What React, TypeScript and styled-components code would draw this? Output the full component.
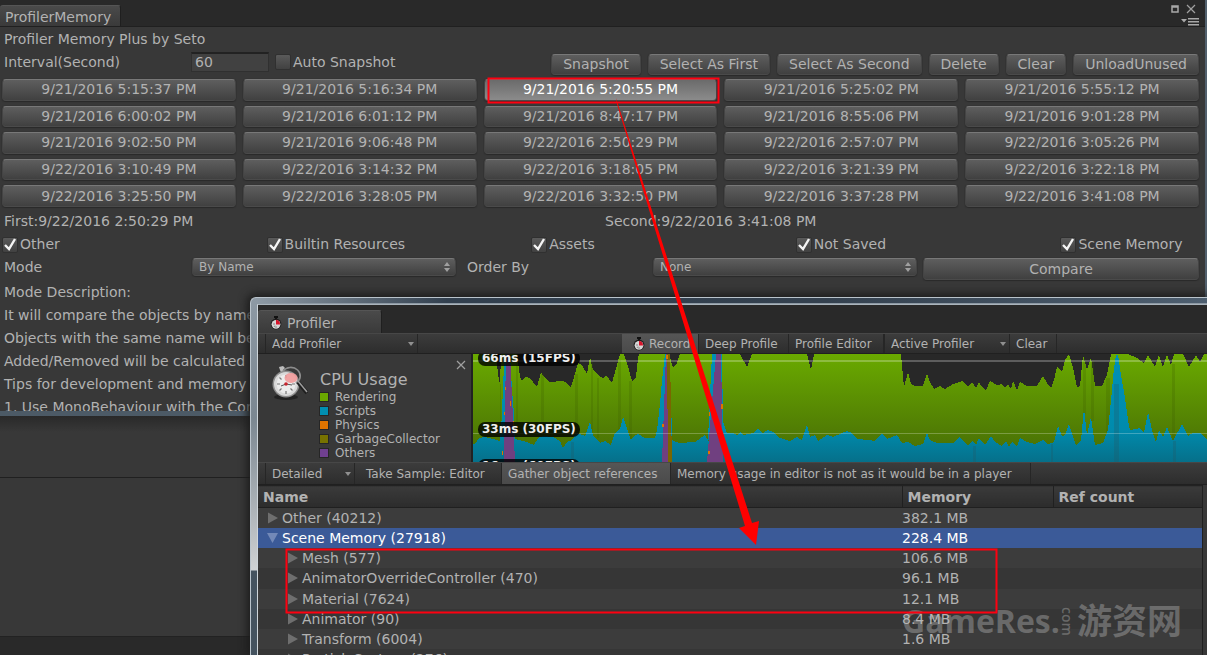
import React from "react";
import styled, { createGlobalStyle, css } from "styled-components";

const GlobalStyle = createGlobalStyle`
  * { box-sizing: border-box; }
  html, body { margin: 0; background: #292929; }
  body, button, input, select, table {
    font-family: "DejaVu Sans", Verdana, "Noto Sans CJK SC", sans-serif;
    font-size: 14px;
    color: #b2b2b2;
  }
`;

const Desktop = styled.main`
  position: relative;
  display: flex;
  flex-direction: column;
  height: 100vh;
  overflow: hidden;
  background: #383838;
`;

/* ---------- Memory window ---------- */

const MemoryWindow = styled.section`
  display: flex;
  flex-direction: column;
  flex: none;
  height: 416px;
  overflow: hidden;
  background: #383838;
  border-right: 2px solid #51606d;
  border-bottom: 5px solid #4c5a66;
`;

const TitleStrip = styled.header`
  display: flex;
  justify-content: space-between;
  align-items: flex-end;
  flex: none;
  height: 27px;
  padding-right: 6px;
  background: #292929;
  border-bottom: 1px solid #202020;
`;

const Tab = styled.h1<{ $wide?: boolean }>`
  display: flex;
  align-items: center;
  gap: ${(p) => (p.$wide ? 5 : 6)}px;
  height: ${(p) => (p.$wide ? 23 : 21)}px;
  margin: 0;
  padding: ${(p) => (p.$wide ? "2px 45px 0 12px" : "1px 9px 0 5px")};
  font-size: 14px;
  font-weight: 400;
  white-space: nowrap;
  background: linear-gradient(#4a4a4a, #3a3a3a);
  border-top: 1px solid #555;
  border-right: 1px solid #1f1f1f;
  border-radius: 3px 3px 0 0;
`;

const WindowButtons = styled.div`
  display: grid;
  justify-items: end;
  gap: 4px;
  line-height: 0;
`;

const IconButton = styled.button`
  display: inline-flex;
  padding: 0;
  background: none;
  border: 0;
`;

const ButtonPair = styled.div`
  display: flex;
  align-items: center;
  gap: 7px;
  padding-right: 3px;
`;

const MemoryBody = styled.div`
  flex: none;
  padding: 1px 6px 0 2px;
`;

const TextLine = styled.p`
  margin: 0;
  padding-left: 2px;
  line-height: 23px;
  white-space: nowrap;
`;

const ControlRow = styled.div`
  display: flex;
  align-items: center;
  height: 22px;
  margin-bottom: 6px;
`;

const FieldLabel = styled.label<{ $width: number }>`
  width: ${(p) => p.$width}px;
  flex: none;
  padding-left: 2px;
`;

const NumberField = styled.input`
  width: 78px;
  height: 20px;
  padding: 0 3px 1px;
  background: #414141;
  border: 1px solid #303030;
  border-top: 2px solid #222;
`;

const Check = styled.label`
  display: inline-flex;
  align-items: center;
  gap: 2px;
  white-space: nowrap;
`;

const CheckBox = styled.input`
  appearance: none;
  width: 16px;
  height: 16px;
  margin: 0;
  background: linear-gradient(#5a5a5a, #414141);
  border: 1px solid #303030;
  border-radius: 2px;
  &:checked {
    background: url("data:image/svg+xml,%3Csvg xmlns='http://www.w3.org/2000/svg' viewBox='0 0 14 14'%3E%3Cpath d='M2 7l4 4 6-10' fill='none' stroke='%23f4f4f4' stroke-width='2.4'/%3E%3C/svg%3E") center / 14px 14px no-repeat,
      linear-gradient(#5a5a5a, #414141);
  }
`;

const raised = css`
  color: #b2b2b2;
  background: linear-gradient(#5e5e5e, #404040);
  border: 1px solid #444;
  border-top-color: #787878;
  border-bottom-color: #4a4a4a;
  border-radius: 4px;
  box-shadow: 0 1px 1px #2a2a2a, 0 0 1px #222;
`;

const Button = styled.button<{ $active?: boolean }>`
  ${raised}
  padding: 0 11px;
  height: 21px;
  line-height: 19px;
  white-space: nowrap;
  ${(p) =>
    p.$active &&
    css`
      color: #fff;
      background: linear-gradient(#6b6b6b, #8b8b8b);
    `}
`;

const Actions = styled.div`
  display: flex;
  gap: 7px;
  margin-left: auto;
  padding-top: 4px;
`;

const SnapshotGrid = styled.div`
  display: grid;
  grid-template-columns: repeat(5, minmax(0, 1fr));
  grid-template-rows: repeat(5, 1fr);
  gap: 5px 7px;
  height: 128px;
  margin-bottom: 3px;
  ${Button} { height: auto; padding: 0; }
`;

const Columns = styled.div<{ $count: number }>`
  display: grid;
  grid-template-columns: repeat(${(p) => p.$count}, 1fr);
  gap: ${(p) => (p.$count === 2 ? 5 : 0)}px;
  width: ${(p) => (p.$count === 5 ? "calc(100% + 126px)" : "100%")};
  line-height: 23px;
`;

const ModeRow = styled.div`
  display: grid;
  grid-template-columns: 190px 264px 9px 188px 264px 1fr;
  grid-template-rows: 22px;
  align-items: center;
  margin-bottom: 3px;
  > :nth-child(4) { grid-column: 5; }
  > :nth-child(3) { grid-column: 4; }
  > ${Button} { margin: 4px 0 0 6px; height: 22px; }
`;

const Select = styled.select`
  ${raised}
  appearance: none;
  width: 100%;
  height: 18px;
  padding: 0 6px;
  font-size: 12px;
  background: url("data:image/svg+xml,%3Csvg xmlns='http://www.w3.org/2000/svg' viewBox='0 0 6 10'%3E%3Cpath d='M3 0l3 4H0zM3 10l3-4H0z' fill='%23a0a0a0'/%3E%3C/svg%3E") right 5px center / 6px 10px no-repeat,
    linear-gradient(#5e5e5e, #404040);
`;

/* ---------- Window behind ---------- */

const BackWindow = styled.section`
  display: flex;
  flex-direction: column;
  flex: 1;
  background: linear-gradient(#292929, #383838 16px);
`;

const BackHeader = styled.div`
  height: 62px;
  border-bottom: 1px solid #202020;
`;

const BackFooter = styled.div`
  height: 19px;
  margin-top: auto;
  background: #292929;
  border-top: 1px solid #222;
`;

/* ---------- Profiler window ---------- */

const ProfilerWindow = styled.section`
  position: absolute;
  left: 250px;
  top: 297px;
  right: 0;
  bottom: 0;
  display: flex;
  padding: 6px 0 0 6px;
  background: linear-gradient(#8d99a4, #7b8791 120px, #c2c6c9 250px, #d0d3d5 272px, #45535f 273px);
  border: 1px solid #b9c3cb;
  border-width: 1px 0 0 1px;
  border-radius: 6px 0 0 0;
  box-shadow: -1px -1px 8px 2px #1c1c1c;
`;

const TopFrame = styled.div`
  position: absolute;
  left: 6px;
  right: 0;
  top: 0;
  height: 5px;
  background: linear-gradient(90deg, #8d99a4, #32404f 190px, #34414f 60%, #4e5f70);
`;

const ProfilerInner = styled.div`
  display: flex;
  flex-direction: column;
  flex: 1;
  min-width: 0;
  overflow: hidden;
  background: #383838;
  border-top: 1px solid #aab4bc;
  border-left: 1px solid #cfd6db;
`;

const ProfilerTabs = styled.header`
  display: flex;
  align-items: flex-end;
  flex: none;
  height: 28px;
  background: #292929;
`;

const Toolbar = styled.div<{ $height: number }>`
  display: flex;
  align-items: stretch;
  flex: none;
  height: ${(p) => p.$height}px;
  padding-left: 7px;
  background: linear-gradient(#3c3c3c, #2d2d2d);
  border-top: 1px solid #474747;
  border-bottom: 1px solid #202020;
`;

const ToolItem = styled.button<{ $on?: boolean; $width: number }>`
  display: flex;
  align-items: center;
  gap: 4px;
  flex: none;
  width: ${(p) => p.$width}px;
  padding: 0 0 0 6px;
  font-size: 12px;
  white-space: nowrap;
  background: ${(p) => (p.$on ? "linear-gradient(#565656, #4a4a4a)" : "none")};
  border: 0;
  border-right: 1px solid #262626;
`;

const RecordItem = styled(ToolItem)`
  padding-left: 11px;
`;

const ToolSelect = styled.select<{ $width: number }>`
  appearance: none;
  width: ${(p) => p.$width}px;
  padding: 0 6px;
  font-size: 12px;
  background: url("data:image/svg+xml,%3Csvg xmlns='http://www.w3.org/2000/svg' viewBox='0 0 6 4'%3E%3Cpath d='M0 0h6L3 4z' fill='%23909090'/%3E%3C/svg%3E") right 3px center / 6px 4px no-repeat;
  border: 0;
  border-left: 1px solid #262626;
  border-right: 1px solid #262626;
  border-radius: 0;
`;

const ToolText = styled.span`
  flex: none;
  width: 360px;
  padding-left: 6px;
  font-size: 12px;
  line-height: 22px;
  white-space: nowrap;
  border-right: 1px solid #262626;
`;

const Spacer = styled.div<{ $width: number }>`
  width: ${(p) => p.$width}px;
  flex: none;
`;

const ChartArea = styled.div`
  display: flex;
  flex: none;
  height: 108px;
`;

const Legend = styled.div`
  display: flex;
  flex: none;
  width: 215px;
  padding: 6px 5px 0 13px;
  border-right: 2px solid #222;
`;

const LogoSlot = styled.div`
  padding-top: 5px;
`;

const LegendText = styled.div`
  flex: 1;
  padding: 10px 0 0 12px;
`;

const LegendTitle = styled.h2`
  margin: 0;
  font-size: 16px;
  font-weight: 400;
  line-height: 20px;
`;

const LegendList = styled.ul`
  margin: 0;
  padding: 0;
  list-style: none;
  font-size: 12px;
  line-height: 14px;
`;

const LegendItem = styled.li<{ $color: string }>`
  display: flex;
  align-items: center;
  gap: 7px;
  &::before {
    content: "";
    width: 8px;
    height: 8px;
    background: ${(p) => p.$color};
    box-shadow: 0 0 0 1px #262626;
  }
`;

const LegendClose = styled(IconButton)`
  align-self: flex-start;
  margin-left: -18px;
`;

const ChartBox = styled.div`
  position: relative;
  flex: 1;
  min-width: 0;
  overflow: hidden;
  background: #282828;
`;

const ChartSvg = styled.svg`
  display: block;
  width: 100%;
  height: 100%;
`;

const FpsBadge = styled.span<{ $top: number }>`
  position: absolute;
  left: 5px;
  top: ${(p) => p.$top}px;
  padding: 0 4px;
  font-size: 12px;
  font-weight: 700;
  line-height: 15px;
  color: #eee;
  white-space: nowrap;
  background: rgba(0, 0, 0, 0.8);
  border-radius: 7px;
`;

const TableArea = styled.div`
  flex: 1;
  min-height: 0;
  margin-right: 4px;
  overflow: hidden;
  border-right: 1px solid #202020;
`;

const Table = styled.table`
  width: 100%;
  height: 184px;
  table-layout: fixed;
  border-collapse: collapse;
  th {
    height: 22px;
    padding: 0 5px;
    text-align: left;
    line-height: 18px;
    background: linear-gradient(#3a3a3a, #2c2c2c);
    border-top: 1px solid #222;
    border-bottom: 1px solid #202020;
  }
  th + th { border-left: 1px solid #202020; }
  td { padding: 0; white-space: nowrap; line-height: 18px; }
`;

const Row = styled.tr<{ $selected?: boolean; $light?: boolean }>`
  color: ${(p) => (p.$selected ? "#fff" : "#b2b2b2")};
  background: ${(p) => (p.$selected ? "#3b5a98" : p.$light ? "#3c3c3c" : "#363636")};
`;

const NameCell = styled.div<{ $depth: number }>`
  display: flex;
  align-items: center;
  gap: 3px;
  padding-left: ${(p) => 9 + p.$depth * 20}px;
`;

const Annotation = styled.svg`
  position: absolute;
  inset: 0;
  width: 100%;
  height: 100%;
  pointer-events: none;
`;

const Watermark = styled.div`
  position: absolute;
  left: 902px;
  bottom: 8px;
  display: flex;
  align-items: center;
  height: 52px;
  font-family: "Open Sans", "Noto Sans CJK SC", sans-serif;
  font-size: 35px;
  font-weight: 700;
  line-height: 52px;
  color: rgba(190, 190, 190, 0.38);
  white-space: nowrap;
  pointer-events: none;
`;

const WatermarkName = styled.span`
  font-size: 32px;
`;

const WatermarkCom = styled.span`
  margin-right: 3px;
  font-size: 14px;
  font-weight: 600;
  line-height: 14px;
  writing-mode: vertical-rl;
`;

const snapshots = [
  "9/21/2016 5:15:37 PM", "9/21/2016 5:16:34 PM", "9/21/2016 5:20:55 PM", "9/21/2016 5:25:02 PM", "9/21/2016 5:55:12 PM",
  "9/21/2016 6:00:02 PM", "9/21/2016 6:01:12 PM", "9/21/2016 8:47:17 PM", "9/21/2016 8:55:06 PM", "9/21/2016 9:01:28 PM",
  "9/21/2016 9:02:50 PM", "9/21/2016 9:06:48 PM", "9/22/2016 2:50:29 PM", "9/22/2016 2:57:07 PM", "9/22/2016 3:05:26 PM",
  "9/22/2016 3:10:49 PM", "9/22/2016 3:14:32 PM", "9/22/2016 3:18:05 PM", "9/22/2016 3:21:39 PM", "9/22/2016 3:22:18 PM",
  "9/22/2016 3:25:50 PM", "9/22/2016 3:28:05 PM", "9/22/2016 3:32:50 PM", "9/22/2016 3:37:28 PM", "9/22/2016 3:41:08 PM",
];

const actions = ["Snapshot", "Select As First", "Select As Second", "Delete", "Clear", "UnloadUnused"];
const filters = ["Other", "Builtin Resources", "Assets", "Not Saved", "Scene Memory"];
const description = [
  "Mode Description:",
  "It will compare the objects by name.",
  "Objects with the same name will be merged.",
  "Added/Removed will be calculated",
  "Tips for development and memory",
  "1. Use MonoBehaviour with the Component",
];

const legend: [string, string][] = [
  ["Rendering", "#6aa800"],
  ["Scripts", "#008fb2"],
  ["Physics", "#e07400"],
  ["GarbageCollector", "#777200"],
  ["Others", "#704090"],
];

type Item = { name: string; size: string; depth: number; open?: boolean };
const items: Item[] = [
  { name: "Other (40212)", size: "382.1 MB", depth: 0 },
  { name: "Scene Memory (27918)", size: "228.4 MB", depth: 0, open: true },
  { name: "Mesh (577)", size: "106.6 MB", depth: 1 },
  { name: "AnimatorOverrideController (470)", size: "96.1 MB", depth: 1 },
  { name: "Material (7624)", size: "12.1 MB", depth: 1 },
  { name: "Animator (90)", size: "8.4 MB", depth: 1 },
  { name: "Transform (6004)", size: "1.6 MB", depth: 1 },
  { name: "ParticleSystem (276)", size: "", depth: 1 },
];

const renderingLine =
  "0,0 23,0 25,20 27,30 28,0 44,0 47,23 49,27 52,23 57,24 64,33 68,18 71,23 77,28 89,27 92,28 94,30 98,33 101,23 105,9 109,11 114,20 117,3 120,16 127,23 130,24 133,22 136,25 139,29 142,18 147,0 151,0 154,9 159,27 163,23 165,4 166,0 196,0 200,14 204,9 207,0 267,0 274,13 279,0 334,0 338,16 341,0 428,0 431,33 435,18 438,30 442,32 450,32 454,19 457,28 461,35 467,32 472,35 480,30 490,27 495,33 499,28 503,34 506,28 509,33 513,36 517,27 524,31 529,30 532,34 535,30 538,35 540,27 544,36 547,28 554,32 564,32 570,22 574,29 578,34 581,26 584,13 589,18 592,6 596,0 600,14 604,33 607,32 610,1 614,16 618,3 622,32 629,32 634,21 638,0 655,0 664,4 671,9 675,1 682,13 686,1 690,13 694,1 698,11 701,0 710,0 716,13 723,1 727,8 731,0 740,0";

const scriptsLine =
  "0,90 3,89 6,84 12,83 20,85 27,87 29,60 30,30 32,0 37,0 39,36 41,60 42,85 54,88 61,91 65,84 70,82 80,83 87,87 90,94 94,88 99,86 104,79 112,82 117,68 120,81 127,89 132,87 138,91 142,79 147,75 150,63 154,74 158,86 160,83 165,80 172,84 182,84 184,76 187,50 189,26 192,0 196,0 198,40 199,86 206,89 222,88 232,81 236,88 239,87 235,86 237,40 239,0 249,0 250,68 254,79 260,79 264,81 267,78 270,81 280,79 285,75 290,79 295,76 300,78 307,84 317,87 324,83 329,86 334,71 337,83 342,81 345,87 354,81 360,83 374,77 379,79 384,85 395,86 402,87 409,79 414,85 424,81 429,89 435,88 442,92 450,90 454,79 457,86 464,89 480,89 487,83 495,92 499,87 503,91 506,84 512,91 518,82 522,88 529,92 533,87 536,93 539,88 544,93 547,84 554,88 562,90 570,86 575,90 581,88 585,72 589,82 592,81 596,70 599,79 603,92 608,86 611,54 614,81 618,63 622,91 630,89 635,76 638,46 641,14 643,1 645,1 648,21 652,44 655,66 657,76 667,74 671,79 675,58 679,76 683,88 686,76 690,83 694,73 700,87 709,70 715,82 720,79 727,79 734,85 740,85";

const area = (line: string) => `0,108 ${line} 740,108`;

function Stopwatch() {
  return (
    <svg width="12" height="14" viewBox="0 0 12 14" aria-hidden="true">
      <path d="M4 0h4v2H7v1H5V2H4z" fill="#111" />
      <circle cx="6" cy="8" r="5.4" fill="#1d1d1d" />
      <circle cx="6" cy="8.3" r="4.4" fill="#d6d6d6" />
      <path d="M6 8.5V3.8a4.6 4.6 0 0 1 4 4.7z" fill="#d8152c" />
      <path d="M3 8h2M4 11l1-1.500M6 12v-2" stroke="#888" strokeWidth="1" />
    </svg>
  );
}

function ProfilerLogo() {
  return (
    <svg width="37" height="36" viewBox="0 0 37 36" aria-hidden="true">
      <ellipse cx="15" cy="32" rx="12" ry="3" fill="#222" />
      <path d="M8 2l4-1 2 2-2 2 1 4-2 1-2-5z" fill="#bdbdbd" />
      <circle cx="15" cy="19" r="13.500" fill="#8e8e8e" />
      <circle cx="15" cy="19" r="12" fill="#d9d9d9" />
      <circle cx="15" cy="19" r="9.500" fill="#ececec" />
      <path d="M15 10v3M6 19h3M15 26v3M21 19h3M8.500 12.500l2 2M8.500 25.500l2-2M21.500 25.500l-2-2" stroke="#777" strokeWidth="1.200" />
      <path d="M15 19l-5 2M15 19l6 1" stroke="#555" strokeWidth="1" />
      <ellipse cx="20" cy="13" rx="6.500" ry="5" fill="#f29a9a" opacity=".9" />
      <circle cx="15" cy="19" r="1.800" fill="#c8232d" />
      <path d="M12 6a9.500 8.500 0 1 1 13 12" fill="none" stroke="#8c8c8c" strokeWidth="1.600" />
      <path d="M27 17l9 11" stroke="#1f1f1f" strokeWidth="4" />
      <path d="M27 16l9 11" stroke="#9d9d9d" strokeWidth="1.500" />
    </svg>
  );
}

function Close() {
  return (
    <svg width="10" height="10" viewBox="0 0 10 10" aria-hidden="true">
      <path d="M1 1l8 8M9 1L1 9" stroke="#a0a0a0" strokeWidth="1.200" />
    </svg>
  );
}

function Triangle({ open }: { open?: boolean }) {
  return (
    <svg width="12" height="12" viewBox="0 0 12 12" aria-hidden="true">
      <path d={open ? "M0 1h11L5.500 11z" : "M1 0.500l10 5.500-10 5.500z"} fill={open ? "#7389b8" : "#6e6e6e"} />
    </svg>
  );
}

function CpuChart() {
  return (
    <ChartBox>
      <ChartSvg viewBox="0 0 734 108" preserveAspectRatio="none" shapeRendering="crispEdges" role="img" aria-label="CPU usage">
        <defs>
          <linearGradient id="rendering" gradientUnits="userSpaceOnUse" x1="0" y1="0" x2="0" y2="108">
            <stop offset="0" stopColor="#6aaa00" />
            <stop offset="1" stopColor="#466a06" />
          </linearGradient>
          <linearGradient id="scripts" gradientUnits="userSpaceOnUse" x1="0" y1="0" x2="0" y2="108">
            <stop offset="0" stopColor="#0090b6" />
            <stop offset="0.7" stopColor="#008bad" />
            <stop offset="1" stopColor="#06708a" />
          </linearGradient>
        </defs>
        <polygon points={area(renderingLine)} fill="url(#rendering)" />
        <path d="M27 30h1v57h-1zM43 0h2v87h-2zM68 20h3v62h-3zM102 20h3v60h-3zM118 8h2v70h-2zM124 24h2v60h-2zM145 6h3v70h-3zM156 27h3v58h-3zM610 5h3v55h-3zM618 7h3v60h-3zM633 24h4v54h-4zM699 10h3v76h-3z" fill="#3c5c00" opacity=".22" />
        <polygon points={area(scriptsLine)} fill="url(#scripts)" />
        <path d="M31 108L33 0h4l5 108zM189 108l4-108h2v108zM234 108L243 0h5l2 108z" fill="#704080" />
        <path d="M194 0h3l2 108h-4z" fill="#7a6600" />
        <path d="M32 33h1v3h-1zM37 47h1v5h-1zM31 58h1v3h-1zM40 67h1v5h-1zM29 97h1v4h-1zM193 1h2v4h-2zM189 70h2v3h-2zM236 58h1v4h-1zM248 50h2v5h-2zM235 97h2v3h-2z" fill="#e07400" />
        <path d="M641 30h5v78h-5zM700 87h3v21h-3zM98 88h3v20h-3zM500 92h3v16h-3zM578 90h2v18h-2z" fill="#205868" opacity=".3" />
        <path d="M0 6h734v2H0zM0 79h734v1H0z" fill="#fff" opacity=".25" />
      </ChartSvg>
      <FpsBadge $top={-3}>66ms (15FPS)</FpsBadge>
      <FpsBadge $top={68}>33ms (30FPS)</FpsBadge>
      <FpsBadge $top={105}>16ms (60FPS)</FpsBadge>
    </ChartBox>
  );
}

function MemoryPanel() {
  return (
    <MemoryWindow>
      <TitleStrip>
        <Tab>ProfilerMemory</Tab>
        <WindowButtons>
          <ButtonPair>
            <IconButton aria-label="Maximize">
              <svg width="8" height="8" viewBox="0 0 8 8"><path d="M1 1h6v6H1zM1 2h6" fill="none" stroke="#a8a8a8" strokeWidth="1.500" /></svg>
            </IconButton>
            <IconButton aria-label="Close"><Close /></IconButton>
          </ButtonPair>
          <IconButton aria-label="Menu">
            <svg width="18" height="8" viewBox="0 0 18 8"><path d="M0 1h6L3 4.500zM7 0h11v1.500H7zM7 3h11v1.500H7zM7 6h11v1.500H7z" fill="#a8a8a8" /></svg>
          </IconButton>
        </WindowButtons>
      </TitleStrip>
      <MemoryBody>
        <TextLine>Profiler Memory Plus by Seto</TextLine>
        <ControlRow>
          <FieldLabel $width={189} htmlFor="interval">Interval(Second)</FieldLabel>
          <NumberField id="interval" defaultValue="60" />
          <Spacer $width={6} />
          <Check><CheckBox type="checkbox" />Auto Snapshot</Check>
          <Actions>
            {actions.map((a) => <Button key={a}>{a}</Button>)}
          </Actions>
        </ControlRow>
        <SnapshotGrid>
          {snapshots.map((s, i) => <Button key={s} $active={i === 2}>{s}</Button>)}
        </SnapshotGrid>
        <Columns $count={2}>
          <TextLine>First:9/22/2016 2:50:29 PM</TextLine>
          <TextLine>Second:9/22/2016 3:41:08 PM</TextLine>
        </Columns>
        <Columns $count={5}>
          {filters.map((f) => (
            <Check key={f}><CheckBox type="checkbox" defaultChecked />{f}</Check>
          ))}
        </Columns>
        <ModeRow>
          <FieldLabel $width={188} htmlFor="mode">Mode</FieldLabel>
          <Select id="mode"><option>By Name</option></Select>
          <FieldLabel $width={186} htmlFor="order">Order By</FieldLabel>
          <Select id="order"><option>None</option></Select>
          <Button>Compare</Button>
        </ModeRow>
        {description.map((d) => <TextLine key={d}>{d}</TextLine>)}
      </MemoryBody>
    </MemoryWindow>
  );
}

function Profiler() {
  return (
    <ProfilerWindow>
      <TopFrame />
      <ProfilerInner>
        <ProfilerTabs>
          <Tab as="h2" $wide><Stopwatch />Profiler</Tab>
        </ProfilerTabs>
        <Toolbar $height={21}>
          <ToolSelect $width={153} aria-label="Add Profiler"><option>Add Profiler</option></ToolSelect>
          <Spacer $width={204} />
          <RecordItem $on $width={77}><Stopwatch />Record</RecordItem>
          <ToolItem $width={90}>Deep Profile</ToolItem>
          <ToolItem $width={95}>Profile Editor</ToolItem>
          <ToolSelect $width={126} aria-label="Active Profiler"><option>Active Profiler</option></ToolSelect>
          <ToolItem $width={47}>Clear</ToolItem>
        </Toolbar>
        <ChartArea>
          <Legend>
            <LogoSlot><ProfilerLogo /></LogoSlot>
            <LegendText>
              <LegendTitle>CPU Usage</LegendTitle>
              <LegendList>
                {legend.map(([name, color]) => <LegendItem key={name} $color={color}>{name}</LegendItem>)}
              </LegendList>
            </LegendText>
            <LegendClose aria-label="Remove"><Close /></LegendClose>
          </Legend>
          <CpuChart />
        </ChartArea>
        <Toolbar $height={23}>
          <ToolSelect $width={90} aria-label="View"><option>Detailed</option></ToolSelect>
          <Spacer $width={5} />
          <ToolItem $width={142}>Take Sample: Editor</ToolItem>
          <ToolItem $on $width={169}>Gather object references</ToolItem>
          <ToolText>Memory usage in editor is not as it would be in a player</ToolText>
        </Toolbar>
        <TableArea>
          <Table>
            <colgroup><col /><col width="151" /><col width="149" /></colgroup>
            <thead><tr><th>Name</th><th>Memory</th><th>Ref count</th></tr></thead>
            <tbody>
              {items.map((item, i) => (
                <Row key={item.name} $selected={item.open} $light={i % 2 === 0}>
                  <td><NameCell $depth={item.depth}><Triangle open={item.open} />{item.name}</NameCell></td>
                  <td>{item.size}</td>
                  <td />
                </Row>
              ))}
            </tbody>
          </Table>
        </TableArea>
      </ProfilerInner>
    </ProfilerWindow>
  );
}

export default function App() {
  return (
    <Desktop>
      <GlobalStyle />
      <MemoryPanel />
      <BackWindow><BackHeader /><BackFooter /></BackWindow>
      <Profiler />
      <Watermark><WatermarkName>GameRes.</WatermarkName><WatermarkCom>com</WatermarkCom><span>游资网</span></Watermark>
      <Annotation aria-hidden="true">
        <path d="M616 98L752 523l7-2-3 24-17-17 6-2L617 104z" fill="#f00" />
        <path d="M488.500 78.500h230v24h-230zM286.500 549.500h710v63h-710z" fill="none" stroke="#ff0010" strokeWidth="2" />
      </Annotation>
    </Desktop>
  );
}
